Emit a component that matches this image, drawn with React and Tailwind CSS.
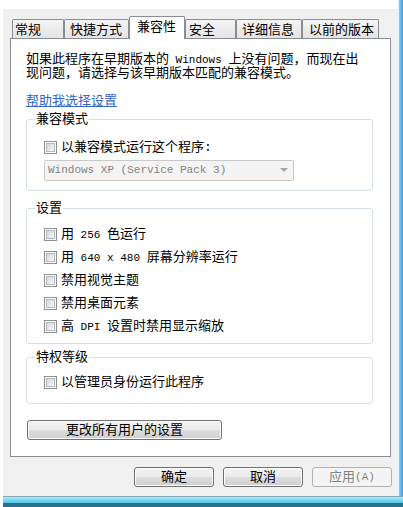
import React from 'react';

const L = ({ children }) => <span className="text-[11px]">{children}</span>;

const Checkbox = () => (
  <div className="w-[13px] h-[13px] shrink-0 border border-[#8f8f8f] bg-white p-px">
    <div className="w-full h-full border border-[#b3b8be] bg-gradient-to-br from-[#d4d8dd] to-[#f8f8f8]" />
  </div>
);

const CheckRow = ({ children }) => (
  <div className="flex items-center h-[13px]">
    <Checkbox />
    <span className="ml-[4px] leading-[13px] whitespace-nowrap">{children}</span>
  </div>
);

const Group = ({ title, className, children }) => (
  <fieldset className={`w-[347px] p-0 m-0 border border-[#d5dfe5] rounded-[3px] ${className}`}>
    <legend className="ml-[8px] px-px leading-[13px]">{title}</legend>
    {children}
  </fieldset>
);

const btn =
  'h-[20px] border border-[#707070] rounded-[3px] shadow-[inset_0_0_0_1px_#fcfcfc] bg-[linear-gradient(#f2f2f2,#ebebeb_50%,#dddddd_50%,#cfcfcf)] flex items-center justify-center leading-[13px]';

const tabs = [
  { label: '常规', w: 'w-[52px]', pl: 'pl-[2px]' },
  { label: '快捷方式', w: 'w-[65px]', pl: 'pl-[5px]' },
  { label: '兼容性', w: 'w-[56px]', pl: 'pl-[7px]', active: true },
  { label: '安全', w: 'w-[51px]', pl: 'pl-[3px]' },
  { label: '详细信息', w: 'w-[66px]', pl: 'pl-[5px]' },
  { label: '以前的版本', w: 'w-[77px]', pl: 'pl-[6px]' },
];

export default function App() {
  return (
    <div className="w-[403px] h-[507px] bg-white flex flex-col overflow-hidden text-[13px] text-black font-['Liberation_Mono','Noto_Sans_CJK_SC',monospace]">
      <div className="flex h-[496px]">
        <div className="w-[398px] pl-[3px] pt-[9px] flex flex-col">
          <div className="flex-1 bg-[#f0f0f0] pt-[7px] flex flex-col">
            {/* tabs */}
            <div className="flex items-end ml-[9px] relative z-10">
              {tabs.map((t) =>
                t.active ? (
                  <div
                    key={t.label}
                    className={`${t.w} ${t.pl} h-[23px] -mb-px bg-white border border-b-0 border-[#898c95] rounded-t-[2px] leading-[13px] pt-[4px]`}
                  >
                    {t.label}
                  </div>
                ) : (
                  <div
                    key={t.label}
                    className={`${t.w} ${t.pl} h-[19px] border border-b-0 border-[#898c95] rounded-t-[2px] bg-gradient-to-b from-[#f4f4f4] to-[#e4e4e4] leading-[13px] pt-[4px]`}
                  >
                    {t.label}
                  </div>
                )
              )}
            </div>

            {/* panel */}
            <div className="mx-[7px] h-[419px] bg-white border border-[#898c95] pl-[15px] pt-[14px] flex flex-col">
              <p className="leading-[13px] whitespace-nowrap">
                如果此程序在早期版本的<L> Windows </L>上没有问题，而现在出
                <br />
                现问题，请选择与该早期版本匹配的兼容模式。
              </p>
              <a className="mt-[15px] leading-[13px] text-[#3366cc] underline self-start cursor-pointer">
                帮助我选择设置
              </a>

              <Group title="兼容模式" className="mt-[5px]">
                <div className="pl-[17px] pt-[15px] pb-[9px]">
                  <CheckRow>以兼容模式运行这个程序:</CheckRow>
                  <div className="mt-[6px] w-[250px] h-[21px] border border-[#c9c9c9] rounded-[2px] bg-[#f4f4f4] flex items-center justify-between pl-[3px] pr-[5px]">
                    <span className="text-[11px] text-[#838383] leading-[13px]">
                      Windows XP (Service Pack 3)
                    </span>
                    <svg width="8" height="5" viewBox="0 0 8 5">
                      <polygon points="0,0 8,0 4,4" fill="#a6a6a6" />
                    </svg>
                  </div>
                </div>
              </Group>

              <Group title="设置" className="mt-[11px]">
                <div className="pl-[17px] pt-[13px] pb-[10px] flex flex-col gap-[10px]">
                  <CheckRow>
                    用<L> 256 </L>色运行
                  </CheckRow>
                  <CheckRow>
                    用<L> 640 x 480 </L>屏幕分辨率运行
                  </CheckRow>
                  <CheckRow>禁用视觉主题</CheckRow>
                  <CheckRow>禁用桌面元素</CheckRow>
                  <CheckRow>
                    高<L> DPI </L>设置时禁用显示缩放
                  </CheckRow>
                </div>
              </Group>

              <Group title="特权等级" className="mt-[7px]">
                <div className="pl-[17px] pt-[12px] pb-[14px]">
                  <CheckRow>以管理员身份运行此程序</CheckRow>
                </div>
              </Group>

              <button className={`${btn} mt-[16px] ml-px w-[195px]`}>更改所有用户的设置</button>
            </div>

            {/* dialog buttons */}
            <div className="mt-[10px] flex justify-end gap-[9px] pr-[6px]">
              <button className={`${btn} w-[80px]`}>确定</button>
              <button className={`${btn} w-[80px]`}>取消</button>
              <button className="w-[80px] h-[20px] border border-[#adb2b5] rounded-[3px] bg-[#f4f4f4] text-[#838383] flex items-center justify-center leading-[13px]">
                应用<L> (A)</L>
              </button>
            </div>
          </div>
        </div>
        <div className="w-[5px] border-l border-[#e6f2fa] bg-gradient-to-r from-[#8cc8ee] to-[#3f9ee0]" />
      </div>
      <div className="h-[11px] ml-[3px] flex flex-col">
        <div className="h-px bg-[#8aa6b5]" />
        <div className="h-[6px] bg-gradient-to-b from-[#a6ecf8] to-[#4cc4ea]" />
        <div className="flex-1 bg-[#2f6f8c]" />
      </div>
    </div>
  );
}
